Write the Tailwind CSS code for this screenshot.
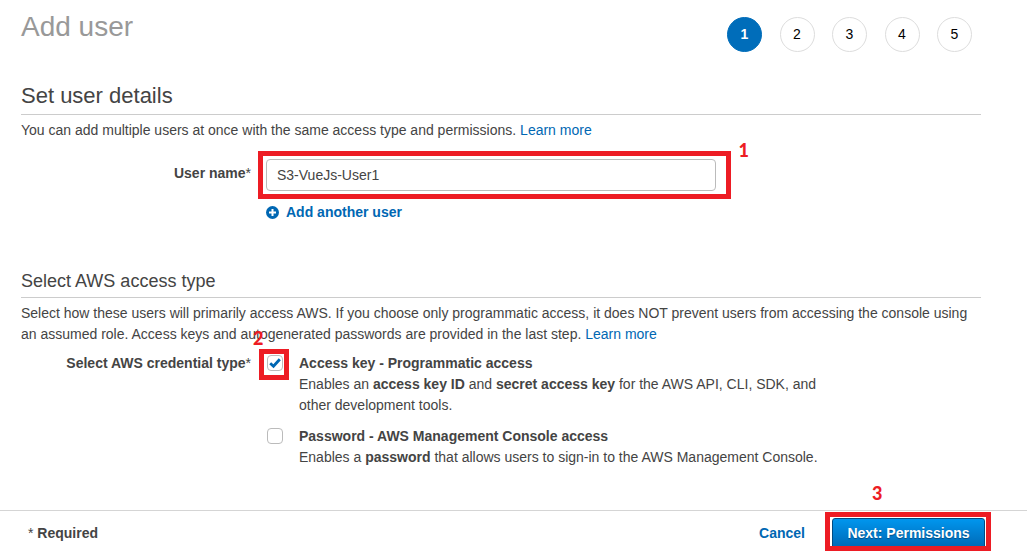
<!DOCTYPE html>
<html lang="en">
<head>
<meta charset="utf-8">
<meta name="viewport" content="width=device-width, initial-scale=1">
<title>Add user</title>
<script src="https://cdn.jsdelivr.net/npm/@tailwindcss/browser@4"></script>
</head>
<body class="flex min-h-screen flex-col bg-white font-['Liberation_Sans',Arial,sans-serif] text-sm/[21px] text-[#444]">
<main class="grow pr-[46px] pl-[21px]">
  <header class="flex items-start justify-between pt-[10px] pr-[9px]">
    <h1 class="text-[28px]/[34px] text-[#999]">Add user</h1>
    <ol class="mt-[7px] flex w-[245px] justify-between text-black">
      <li aria-current="step" class="flex size-[35px] items-center justify-center rounded-full border border-[#006dba] bg-[#006dba] font-bold text-white">1</li>
      <li class="flex size-[35px] items-center justify-center rounded-full border border-[#ddd]">2</li>
      <li class="flex size-[35px] items-center justify-center rounded-full border border-[#ddd]">3</li>
      <li class="flex size-[35px] items-center justify-center rounded-full border border-[#ddd]">4</li>
      <li class="flex size-[35px] items-center justify-center rounded-full border border-[#ddd]">5</li>
    </ol>
  </header>

  <section>
    <h2 class="mt-[30px] border-b border-[#ccc] pb-[5px] text-[22px]/[27px]">Set user details</h2>
    <p class="mt-[5px]">You can add multiple users at once with the same access type and permissions. <a href="#" class="text-[#0067b3]">Learn more</a></p>
    <div class="mt-[18px] flex gap-[15px]">
      <label for="username" class="mt-[4px] w-[230px] shrink-0 text-right"><b>User name</b>*</label>
      <div class="w-[450px]">
        <div class="relative">
          <input id="username" type="text" value="S3-VueJs-User1" class="block h-8 w-full rounded-[4px] border border-[#bbb] bg-white px-[10px]">
          <span class="pointer-events-none absolute -top-2 -right-[15px] -bottom-2 -left-2 border-5 border-[#ed1c24]"></span>
          <span class="absolute -top-[20px] -right-[33px] font-[Lato,sans-serif] text-lg/[22px] font-black text-[#ed1c24]">1</span>
        </div>
        <button type="button" class="mt-[11px] flex items-center gap-[7px] font-bold text-[#0067b3]">
          <svg class="size-[13px]" viewBox="0 0 13 13" aria-hidden="true"><circle cx="6.5" cy="6.5" r="6.5" fill="#0067b3"/><path d="M6.5 3v7M3 6.5h7" stroke="#fff" stroke-width="2"/></svg>
          Add another user
        </button>
      </div>
    </div>
  </section>

  <section>
    <h2 class="mt-[47px] border-b border-[#ccc] pb-[4px] text-lg/[23px]">Select AWS access type</h2>
    <p class="mt-[5px]">Select how these users will primarily access AWS. If you choose only programmatic access, it does NOT prevent users from accessing the console using an assumed role. Access keys and autogenerated passwords are provided in the last step. <a href="#" class="text-[#0067b3]">Learn more</a></p>
    <div role="group" aria-labelledby="credential" class="mt-[8px] flex gap-4">
      <div id="credential" class="w-[230px] shrink-0 text-right"><b>Select AWS credential type</b>*</div>
      <div class="flex max-w-[560px] flex-col gap-[10px]">
        <div class="flex gap-4">
          <div class="relative mt-[2px] size-4 shrink-0">
            <input id="programmatic" type="checkbox" checked class="peer block size-4 appearance-none rounded-[4px] border border-[#bbb] bg-white">
            <svg class="pointer-events-none absolute inset-0 hidden size-4 peer-checked:block" viewBox="0 0 16 16" aria-hidden="true"><path d="M3.2 8.2 6.5 11.3 12.8 4.2" fill="none" stroke="#0067b3" stroke-width="2.8"/></svg>
            <span class="pointer-events-none absolute -top-[6px] -right-[6px] -bottom-[9px] -left-2 border-5 border-[#ed1c24]"></span>
            <span class="absolute -top-[28px] -left-[14px] font-[Lato,sans-serif] text-lg/[22px] font-black text-[#ed1c24]">2</span>
          </div>
          <label for="programmatic"><b class="block">Access key - Programmatic access</b>Enables an <b>access key ID</b> and <b>secret access key</b> for the AWS API, CLI, SDK, and other development tools.</label>
        </div>
        <div class="flex gap-4">
          <input id="password" type="checkbox" class="mt-[2px] block size-4 shrink-0 appearance-none rounded-[4px] border border-[#bbb] bg-white">
          <label for="password"><b class="block">Password - AWS Management Console access</b>Enables a <b>password</b> that allows users to sign-in to the AWS Management Console.</label>
        </div>
      </div>
    </div>
  </section>
</main>

<footer class="flex items-start border-t border-[#d5d5d5] pt-[7px] pr-[42px] pb-[6px] pl-7">
  <p class="mt-[5px] grow">* <b>Required</b></p>
  <button type="button" class="mt-[5px] mr-[27px] font-bold text-[#0067b3]">Cancel</button>
  <div class="relative">
    <button type="button" class="block h-8 w-[153px] rounded-[3px] border border-[#004b82] bg-linear-to-b from-[#0096ee] to-[#0067b3] pb-[2px] font-bold text-white text-shadow-[0_1px_1px_#004b82]">Next: Permissions</button>
    <span class="pointer-events-none absolute -top-[6px] -right-[6px] -bottom-px -left-[7px] border-5 border-[#ed1c24]"></span>
    <span class="absolute -top-[36px] left-[40px] font-[Lato,sans-serif] text-lg/[22px] font-black text-[#ed1c24]">3</span>
  </div>
</footer>
</body>
</html>
